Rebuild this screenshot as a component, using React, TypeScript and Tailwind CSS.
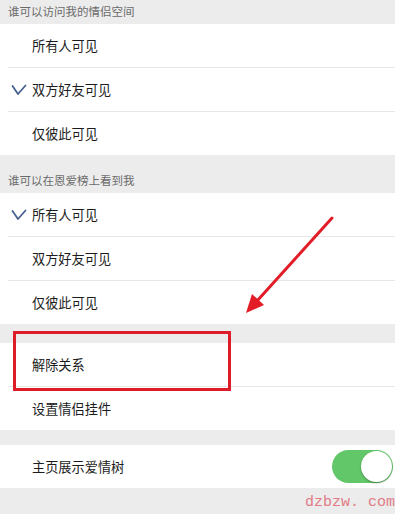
import React from 'react';

const font = { fontFamily: '"Noto Sans CJK SC", "Noto Sans", sans-serif' };

function Check() {
  return (
    <svg width="16" height="12" viewBox="0 0 16 12" className="ml-[3px]">
      <polyline points="1.5,2 7,10 14.5,1.5" fill="none" stroke="#46618f" strokeWidth="1.8" strokeLinecap="round" strokeLinejoin="round" />
    </svg>
  );
}

function Header({ text, top = false }: { text: string; top?: boolean }) {
  return (
    <div className={`${top ? '' : 'pt-[14px]'} bg-[#ececec]`}>
      <div className="h-6 flex items-center pl-2 text-[11.5px] text-[#6b6b6b]">{text}</div>
    </div>
  );
}

function Row({ text, checked = false, last = false, right }: { text: string; checked?: boolean; last?: boolean; right?: React.ReactNode }) {
  return (
    <div className="bg-white pl-2">
      <div className={`flex items-center ${last ? 'h-[43px]' : 'h-[44px] border-b border-[#e6e6e6]'}`}>
        <span className="w-6 flex items-center">{checked && <Check />}</span>
        <span className="flex-1 text-[13.2px] text-[#1c1c1c]">{text}</span>
        {right}
      </div>
    </div>
  );
}

function Toggle() {
  return (
    <div className="w-[61px] h-[33px] rounded-full bg-[#62c768] mr-[2px] flex items-center justify-end pr-[1px]">
      <div className="w-[31px] h-[31px] rounded-full bg-white shadow-[0_1px_2px_rgba(0,0,0,0.35)]" />
    </div>
  );
}

export default function App() {
  return (
    <div className="relative w-[395px] h-[514px] bg-[#ececec] overflow-hidden" style={font}>
      <Header text="谁可以访问我的情侣空间" top />
      <Row text="所有人可见" />
      <Row text="双方好友可见" checked />
      <Row text="仅彼此可见" last />

      <Header text="谁可以在恩爱榜上看到我" />
      <Row text="所有人可见" checked />
      <Row text="双方好友可见" />
      <Row text="仅彼此可见" last />

      <div className="h-[19px]" />
      <Row text="解除关系" />
      <Row text="设置情侣挂件" last />

      <div className="h-[15px]" />
      <Row text="主页展示爱情树" last right={<Toggle />} />

      {/* annotation overlay */}
      <div className="absolute left-[13px] top-[331px] w-[218px] h-[60px] border-[3px] border-[#dc1c28]" />
      <svg className="absolute left-0 top-0" width="395" height="514" viewBox="0 0 395 514">
        <line x1="332" y1="218" x2="257" y2="301" stroke="#e21d27" strokeWidth="3" strokeLinecap="round" />
        <polygon points="246,313 252,294 264,305" fill="#e21d27" />
      </svg>
      <div className="absolute right-0 top-[493px] text-[15px] leading-[20px] text-[#e27b86] whitespace-pre" style={{ fontFamily: '"Liberation Mono", monospace' }}>
        dzbzw. com
      </div>
    </div>
  );
}
